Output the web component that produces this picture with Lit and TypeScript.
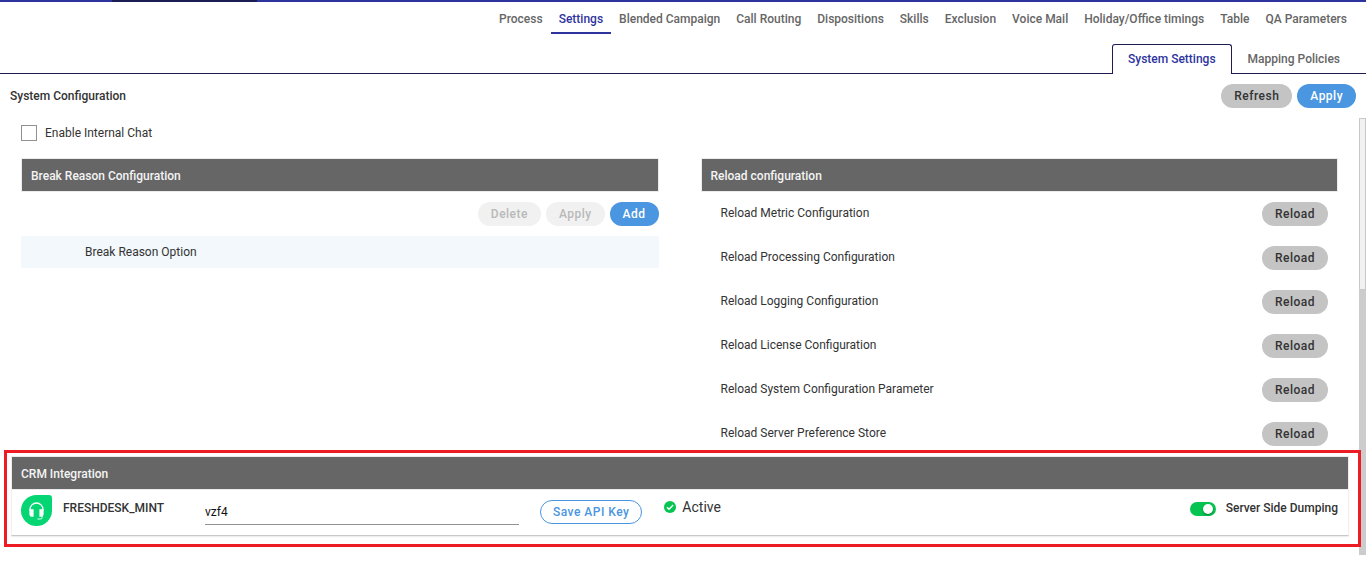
import { LitElement, html, css } from "lit";
import { customElement, property, state } from "lit/decorators.js";

@customElement("section-card")
class SectionCard extends LitElement {
  static styles = css`
    :host {
      display: block;
    }
    .title {
      margin: 0;
      box-sizing: border-box;
      height: 34px;
      border: 1px solid #ececec;
      padding: 1px 9px 0;
      background: #666;
      color: #f4f4f4;
      font-size: 12px;
      line-height: 32px;
      font-weight: 500;
    }
  `;
  @property() heading = "";
  render() {
    return html`<h2 class="title">${this.heading}</h2>
      <slot></slot>`;
  }
}

@customElement("app-root")
class AppRoot extends LitElement {
  static styles = css`
    :host {
      display: block;
      background: #fff;
      color: #333;
      font-family: Roboto, "Liberation Sans", sans-serif;
      font-size: 12px;
      line-height: 16px;
    }
    * {
      box-sizing: border-box;
    }
    .strip {
      height: 2px;
      background: #2e349e;
      padding-left: 112px;
    }
    .strip-mark {
      width: 145px;
      height: 2px;
      background: #1d1d55;
    }
    .nav {
      display: flex;
      justify-content: flex-end;
      padding-right: 11px;
    }
    .nav-link {
      height: 32px;
      padding: 9px 8px 0;
      color: #666;
      font-weight: 500;
      text-decoration: none;
      border-bottom: 2px solid transparent;
    }
    .nav-link.active {
      color: #2e349e;
      border-bottom-color: #2e349e;
    }
    .subnav {
      display: flex;
      justify-content: flex-end;
      margin-top: 10px;
      padding-right: 10px;
      box-shadow: inset 0 -1px 0 #1d1b52;
    }
    .subnav-link {
      height: 30px;
      padding: 6px 15px;
      border: 1px solid transparent;
      border-bottom: 0;
      border-radius: 3px 3px 0 0;
      color: #666;
      font-weight: 500;
      text-decoration: none;
    }
    .subnav-link.active {
      color: #2e349e;
      background: #fff;
      border-color: #1d1b52;
    }
    .titlebar {
      display: flex;
      align-items: center;
      gap: 5px;
      height: 44px;
      padding: 0 10px;
    }
    .page-title {
      margin: 0 auto 0 0;
      font-size: 12px;
      font-weight: 500;
    }
    .btn {
      height: 24px;
      padding: 0 13px;
      border: 0;
      border-radius: 12px;
      background: #c4c4c4;
      color: #333;
      font-family: inherit;
      font-size: 12px;
      line-height: 24px;
      font-weight: 500;
      letter-spacing: 0.04em;
      white-space: nowrap;
    }
    .btn.primary {
      background: #4a96e0;
      color: #fff;
    }
    .btn:disabled {
      background: #f1f1f1;
      color: #b9b9b9;
    }
    .btn.outline {
      padding: 0 12px;
      border: 1px solid #4a96e0;
      background: #fff;
      color: #4a96e0;
      line-height: 22px;
    }
    .body {
      display: grid;
      grid-template-columns: minmax(0, 1fr) 7px;
    }
    .content {
      padding-bottom: 19px;
    }
    .scroll-track {
      background: #ccc;
    }
    .scroll-thumb {
      height: 172px;
      border: 1px solid #c8c8c8;
      background: #f1f1f1;
    }
    .check {
      display: flex;
      align-items: center;
      gap: 8px;
      width: max-content;
      margin: 7px 21px 17px;
    }
    .check-box {
      appearance: none;
      width: 16px;
      height: 16px;
      margin: 0;
      border: 1px solid #919191;
      background: #fff;
    }
    .columns {
      display: grid;
      grid-template-columns: 1fr 1fr;
      gap: 42px;
      padding: 0 21px;
    }
    .toolbar {
      display: flex;
      justify-content: flex-end;
      gap: 5px;
      padding: 10px 0;
    }
    .option {
      padding: 8px 64px;
      background: #f2f8fb;
    }
    .reload {
      display: flex;
      justify-content: space-between;
      padding: 10px 10px 10px 20px;
      line-height: 22px;
    }
    .crm {
      position: relative;
      margin: 0 10px 0 11px;
    }
    .highlight {
      position: absolute;
      inset: -6px -12px -11px -7px;
      border: 3px solid #ed1c24;
      pointer-events: none;
    }
    .crm-row {
      display: grid;
      grid-template-columns: 181px minmax(0, 314px) auto 1fr auto;
      align-items: start;
      height: 46px;
      padding: 5px 10px 0 9px;
      border: 1px solid #f0f0f0;
      border-top: 0;
      border-bottom-color: #c8c8c8;
      box-shadow: 0 1px 1px #eee;
    }
    .brand {
      display: flex;
      gap: 11px;
      font-weight: 500;
      line-height: 26px;
    }
    .logo {
      width: 31px;
      height: 31px;
      flex: none;
    }
    .key {
      width: 100%;
      height: 30px;
      margin-left: 3px;
      padding: 4px 0 0;
      border: 0;
      border-bottom: 1px solid #919191;
      border-radius: 0;
      background: transparent;
      color: #111;
      font-family: inherit;
      font-size: 12px;
      outline: 0;
    }
    .save {
      padding: 5px 0 0 24px;
    }
    .status {
      display: flex;
      align-items: center;
      gap: 6px;
      padding-left: 22px;
      font-size: 14px;
      line-height: 24px;
    }
    .status-icon {
      width: 12px;
      height: 12px;
    }
    .dump {
      display: flex;
      align-items: center;
      gap: 10px;
      font-weight: 500;
      line-height: 26px;
    }
    .toggle {
      appearance: none;
      display: flex;
      align-items: center;
      width: 26px;
      height: 14px;
      margin: 2px 0 0;
      padding: 0 3px;
      border-radius: 7px;
      background: #aaa;
    }
    .toggle::before {
      content: "";
      width: 10px;
      height: 10px;
      border-radius: 5px;
      background: #fff;
      box-shadow: 0 1px 2px rgba(0, 0, 0, 0.4);
    }
    .toggle:checked {
      justify-content: flex-end;
      background: #05c451;
    }
  `;

  @state() private section = "Settings";
  @state() private page = "System Settings";

  private sections = [
    "Process",
    "Settings",
    "Blended Campaign",
    "Call Routing",
    "Dispositions",
    "Skills",
    "Exclusion",
    "Voice Mail",
    "Holiday/Office timings",
    "Table",
    "QA Parameters",
  ];
  private pages = ["System Settings", "Mapping Policies"];
  private reloads = [
    "Reload Metric Configuration",
    "Reload Processing Configuration",
    "Reload Logging Configuration",
    "Reload License Configuration",
    "Reload System Configuration Parameter",
    "Reload Server Preference Store",
  ];

  render() {
    return html`
      <div class="strip"><div class="strip-mark"></div></div>
      <nav class="nav">
        ${this.sections.map(
          (s) =>
            html`<a href="#" class="nav-link ${s === this.section ? "active" : ""}" @click=${() => (this.section = s)}>${s}</a>`
        )}
      </nav>
      <nav class="subnav">
        ${this.pages.map(
          (p) =>
            html`<a href="#" class="subnav-link ${p === this.page ? "active" : ""}" @click=${() => (this.page = p)}>${p}</a>`
        )}
      </nav>
      <header class="titlebar">
        <h1 class="page-title">System Configuration</h1>
        <button class="btn">Refresh</button>
        <button class="btn primary">Apply</button>
      </header>
      <div class="body">
        <main class="content">
          <label class="check"><input class="check-box" type="checkbox" />Enable Internal Chat</label>
          <div class="columns">
            <section-card heading="Break Reason Configuration">
              <div class="toolbar">
                <button class="btn" disabled>Delete</button>
                <button class="btn" disabled>Apply</button>
                <button class="btn primary">Add</button>
              </div>
              <div class="option">Break Reason Option</div>
            </section-card>
            <section-card heading="Reload configuration">
              ${this.reloads.map(
                (r) => html`<div class="reload"><span>${r}</span><button class="btn">Reload</button></div>`
              )}
            </section-card>
          </div>
          <div class="crm">
            <section-card heading="CRM Integration">
              <div class="crm-row">
                <label class="brand" for="key">
                  <svg class="logo" viewBox="0 0 31 31" aria-hidden="true">
                    <path d="M15.5 0H28Q31 0 31 3V15.5A15.5 15.5 0 1 1 15.5 0Z" fill="#05d572" />
                    <path d="M9 15.5V14.5a6.5 6.5 0 0 1 13 0V15.5" fill="none" stroke="#fff" stroke-width="1.3" />
                    <path d="M8.4 14.2h4.2v7.6h-1.8a2.4 2.4 0 0 1-2.4-2.4zM18.4 14.2h4.2v5.2a2.4 2.4 0 0 1-2.4 2.4h-1.8z" fill="#fff" />
                    <path d="M21.2 21v1.2q0 1.8-1.8 1.8h-3" fill="none" stroke="#fff" stroke-width="0.9" />
                  </svg>
                  FRESHDESK_MINT
                </label>
                <input class="key" id="key" type="text" value="vzf4" />
                <div class="save"><button class="btn outline">Save API Key</button></div>
                <div class="status">
                  <svg class="status-icon" viewBox="0 0 12 12" aria-hidden="true">
                    <circle cx="6" cy="6" r="6" fill="#05c451" />
                    <path d="M2.9 6.2 5 8.3 9.2 4" fill="none" stroke="#fff" stroke-width="1.4" />
                  </svg>
                  Active
                </div>
                <label class="dump"><input class="toggle" type="checkbox" role="switch" checked />Server Side Dumping</label>
              </div>
            </section-card>
            <div class="highlight"></div>
          </div>
        </main>
        <div class="scroll-track"><div class="scroll-thumb"></div></div>
      </div>
    `;
  }
}
